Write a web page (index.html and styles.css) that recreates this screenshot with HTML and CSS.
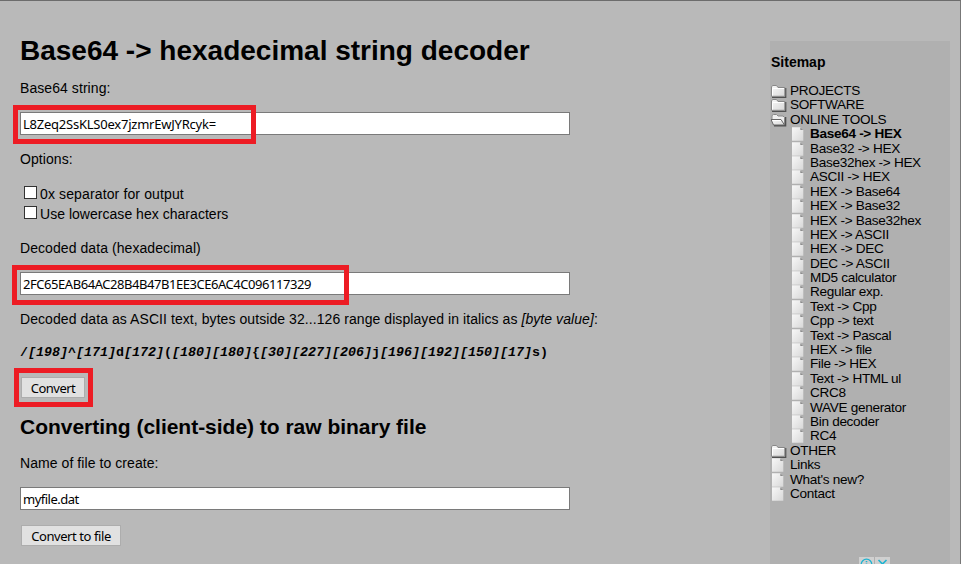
FILE: index.html
```
<!DOCTYPE html>
<html lang="en">
<head>
<meta charset="utf-8">
<title>Base64 -&gt; hexadecimal string decoder</title>
<link rel="stylesheet" href="styles.css">
</head>
<body>
<svg class="defs" width="0" height="0">
  <defs>
    <linearGradient id="paper" x1="0" y1="0" x2="1" y2="1"><stop offset="0" stop-color="#f8f8f8"/><stop offset="1" stop-color="#d8d8d8"/></linearGradient>
    <symbol id="folder" viewBox="0 0 16 14">
      <path d="M1 13.3H14.7V4" fill="none" stroke="#505050" stroke-width="1.3"/>
      <path d="M.5 12.3V3L1.5 1.5H5.5L7 3.5H13.8V12.3Z" fill="url(#paper)" stroke="#888"/>
      <path d="M1.5 11.5V4.5H13" fill="none" stroke="#fff"/>
    </symbol>
    <symbol id="open" viewBox="0 0 16 14">
      <path d="M3 12.8H14.5V4" fill="none" stroke="#505050" stroke-width="1.6"/>
      <path d="M1 6V2.5L2.5 1.5H5.5L7 3H12L13.5 4.5V11" fill="#eee" stroke="#888"/>
      <path d="M0 6.5H10L13.5 12H2.5Z" fill="url(#paper)" stroke="#666"/>
      <path d="M1.5 7.5H10" stroke="#fff"/>
    </symbol>
    <symbol id="page" viewBox="0 0 16 14">
      <path d="M1 .2H9.5L12.3 3V13.7H1Z" fill="url(#paper)"/>
      <path d="M9.3 .2V3H12.3Z" fill="#8c8c8c"/>
    </symbol>
  </defs>
</svg>
<div class="layout">
  <main class="main">
    <h1><span>Base64 -&gt; hexadecimal string decoder</span></h1>
    <p class="label">Base64 string:</p>
    <div class="field"><input type="text" class="b64" value="L8Zeq2SsKLS0ex7jzmrEwJYRcyk="><i class="mark mark-input"></i></div>
    <p class="label options">Options:</p>
    <label class="check"><input type="checkbox"><span class="separator">0x separator for output</span></label>
    <label class="check"><input type="checkbox"><span class="lower">Use lowercase hex characters</span></label>
    <p class="label decoded">Decoded data (hexadecimal)</p>
    <div class="field"><input type="text" class="hex" value="2FC65EAB64AC28B4B47B1EE3CE6AC4C096117329"><i class="mark mark-output"></i></div>
    <p class="label ascii"><span>Decoded data as ASCII text, bytes outside 32...126 range displayed in italics as <em>[byte value]</em>:</span></p>
    <p class="bytes">/<em>[198]</em>^<em>[171]</em>d<em>[172]</em>(<em>[180][180]</em>{<em>[30][227][206]</em>j<em>[196][192][150][17]</em>s)</p>
    <div class="action"><button class="convert">Convert</button><i class="mark mark-button"></i></div>
    <h2><span>Converting (client-side) to raw binary file</span></h2>
    <p class="label filename">Name of file to create:</p>
    <div class="field"><input type="text" value="myfile.dat"></div>
    <div class="action save"><button class="tofile">Convert to file</button></div>
  </main>
  <aside class="sidebar">
    <h3>Sitemap</h3>
    <ul class="tree">
      <li><svg><use href="#folder"/></svg>PROJECTS</li>
      <li><svg><use href="#folder"/></svg>SOFTWARE</li>
      <li><svg><use href="#open"/></svg>ONLINE TOOLS</li>
      <li class="sub current"><svg><use href="#page"/></svg>Base64 -&gt; HEX</li>
      <li class="sub"><svg><use href="#page"/></svg>Base32 -&gt; HEX</li>
      <li class="sub"><svg><use href="#page"/></svg>Base32hex -&gt; HEX</li>
      <li class="sub"><svg><use href="#page"/></svg>ASCII -&gt; HEX</li>
      <li class="sub"><svg><use href="#page"/></svg>HEX -&gt; Base64</li>
      <li class="sub"><svg><use href="#page"/></svg>HEX -&gt; Base32</li>
      <li class="sub"><svg><use href="#page"/></svg>HEX -&gt; Base32hex</li>
      <li class="sub"><svg><use href="#page"/></svg>HEX -&gt; ASCII</li>
      <li class="sub"><svg><use href="#page"/></svg>HEX -&gt; DEC</li>
      <li class="sub"><svg><use href="#page"/></svg>DEC -&gt; ASCII</li>
      <li class="sub"><svg><use href="#page"/></svg>MD5 calculator</li>
      <li class="sub"><svg><use href="#page"/></svg>Regular exp.</li>
      <li class="sub"><svg><use href="#page"/></svg>Text -&gt; Cpp</li>
      <li class="sub"><svg><use href="#page"/></svg>Cpp -&gt; text</li>
      <li class="sub"><svg><use href="#page"/></svg>Text -&gt; Pascal</li>
      <li class="sub"><svg><use href="#page"/></svg>HEX -&gt; file</li>
      <li class="sub"><svg><use href="#page"/></svg>File -&gt; HEX</li>
      <li class="sub"><svg><use href="#page"/></svg>Text -&gt; HTML ul</li>
      <li class="sub"><svg><use href="#page"/></svg>CRC8</li>
      <li class="sub"><svg><use href="#page"/></svg>WAVE generator</li>
      <li class="sub"><svg><use href="#page"/></svg>Bin decoder</li>
      <li class="sub"><svg><use href="#page"/></svg>RC4</li>
      <li><svg><use href="#folder"/></svg>OTHER</li>
      <li><svg><use href="#page"/></svg>Links</li>
      <li><svg><use href="#page"/></svg>What's new?</li>
      <li><svg><use href="#page"/></svg>Contact</li>
    </ul>
    <svg class="ad" width="31" height="15" viewBox="0 0 31 15">
      <path d="M0 0H15V15H0ZM16 0H31V15H16Z" fill="#d0d0d0"/>
      <circle cx="7.5" cy="7.5" r="5.3" fill="none" stroke="#1eb4d2" stroke-width="1.3"/>
      <path d="M7.5 4V5.3M7.5 6.5V11M19.5 3L27.5 11M27.5 3L19.5 11" stroke="#1eb4d2" stroke-width="1.6"/>
    </svg>
  </aside>
</div>
</body>
</html>
```

FILE: styles.css
```
* { box-sizing: border-box; }
html, body { height: 564px; overflow: hidden; }
body {
  margin: 0;
  background: #b9b9b9;
  color: #000;
  font: 14px/20px "Liberation Sans", Arial, sans-serif;
  border-top: 1px solid #6c6c6c;
  border-right: 1px solid #777;
}
.defs { position: absolute; }
.layout { display: flex; justify-content: space-between; height: 563px; }
.main { width: 550px; margin-left: 20px; padding-top: 34px; white-space: nowrap; }
h1, h2, h3, p { margin: 0; }
h1 { font-size: 28px; line-height: 32px; }
h2 { font-size: 21px; line-height: 26px; margin-top: 14px; letter-spacing: -0.02px; }
.label { margin-top: 11px; height: 20px; letter-spacing: 0.07px; }
.field { position: relative; height: 23px; margin-top: 14px; }
.field input {
  display: block;
  width: 550px;
  height: 23px;
  margin: 0;
  padding: 0 2px;
  border: 1px solid #7a7a7a;
  background: #fff;
  color: #000;
  font: 13px/18px "Noto Sans", sans-serif;
  letter-spacing: -0.5px;
}
.field .b64 { letter-spacing: -0.23px; }
.field .hex { letter-spacing: -0.45px; }
.options { margin-top: 14px; margin-bottom: 15px; }
.check { display: flex; align-items: flex-start; height: 20px; padding-left: 4px; }
.check input {
  appearance: none;
  width: 13px;
  height: 13px;
  margin: 2px 3px 0 0;
  border: 1px solid #333;
  background: #fff;
}
.separator { letter-spacing: 0.13px; }
.lower { letter-spacing: 0.03px; }
.decoded { margin-top: 14px; }
.ascii { margin-top: 14px; }
.bytes { margin-top: 14px; font: bold 13.33px/20px "Liberation Mono", monospace; }
.action { position: relative; height: 23px; margin-top: 14px; padding-left: 1px; }
button {
  display: block;
  height: 21px;
  padding: 1px 0 0;
  border: 1px solid #adadad;
  background: #e1e1e1;
  color: #000;
  font: 13px/17px "Noto Sans", sans-serif;
  letter-spacing: -0.5px;
}
.convert { width: 64px; }
.tofile { width: 100px; letter-spacing: -0.42px; }
.mark { position: absolute; border: 5px solid #ed1c24; }
.mark-input { left: -7px; top: -7px; width: 243px; height: 39px; }
.mark-output { left: -8px; top: -7px; width: 337px; height: 40px; }
.mark-button { left: -6px; top: -9px; width: 79px; height: 39px; }
.filename { margin-top: 13px; }
.save { margin-top: 15px; }
.sidebar {
  width: 180px;
  margin: 40px 10px 0 0;
  padding: 11px 0 0 1px;
  background: #b0b0b0;
  white-space: nowrap;
}
h3 { font-size: 14px; line-height: 20px; }
.tree { list-style: none; margin: 11px 0 0; padding: 0; font-size: 13.6px; line-height: 16px; letter-spacing: -0.32px; }
.tree li { display: flex; height: 14.4px; }
.tree svg { width: 16px; height: 14px; margin: 1px 3px 0 0; flex: none; }
.tree .sub { padding-left: 20px; }
.tree .current { font-weight: bold; }
.ad { display: block; margin: 57px 0 0 88px; }
```
